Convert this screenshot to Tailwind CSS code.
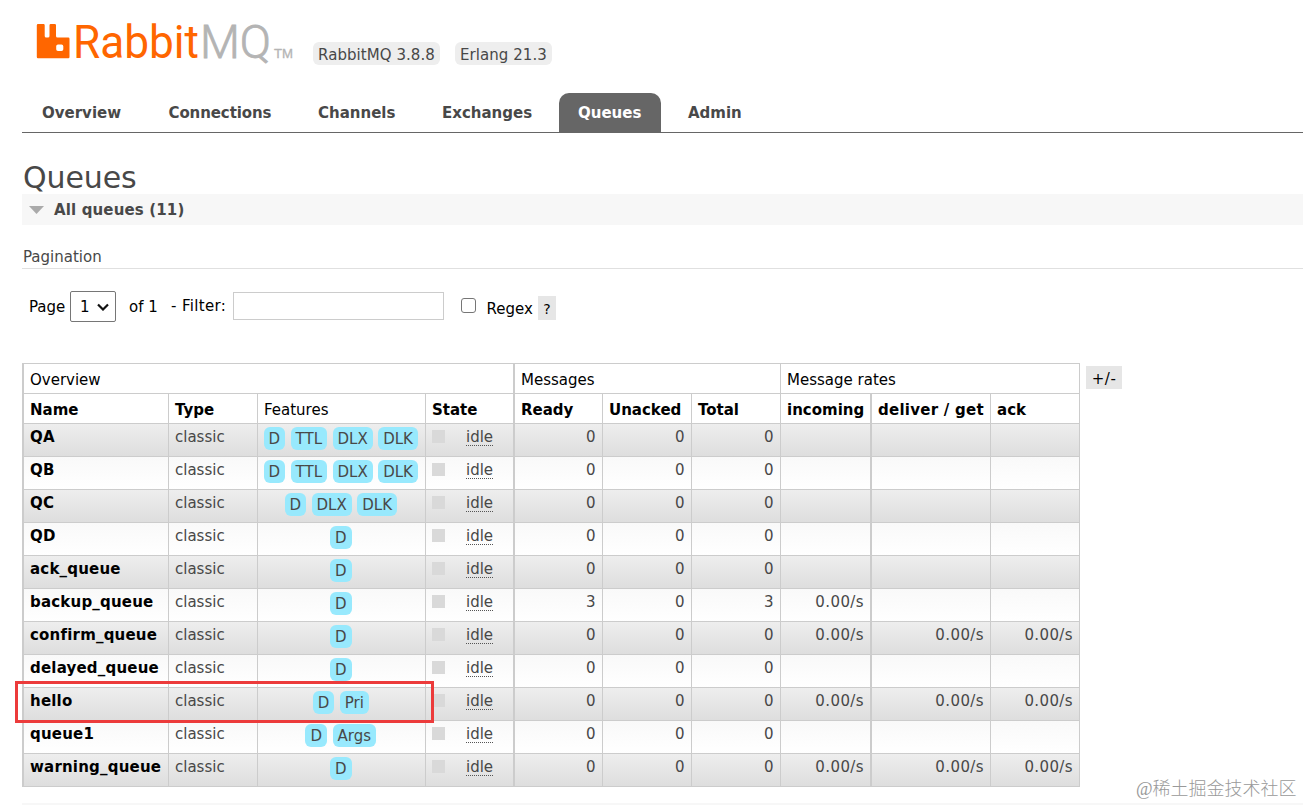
<!DOCTYPE html>
<html lang="en">
	<head>
		<title>RabbitMQ Management</title>
		<meta charset="utf-8" />
		<meta name="viewport" content="width=device-width, initial-scale=1" />
		<script src="https://cdn.jsdelivr.net/npm/@tailwindcss/browser@4"></script>
	</head>
	<body class="relative w-[1303px] h-[805px] overflow-hidden bg-white font-['DejaVu_Sans',sans-serif] text-[15px] leading-5 text-[#484848]">
		<header class="flex h-[93px] pl-[22px]">
			<svg class="w-[291px] h-[80px] shrink-0" viewBox="22 0 291 80">
				<path fill="#f60" fill-rule="evenodd" d="M38 24h5.500q1.200 0 1.200 1.200v10.800q0 1.500 1.500 1.500h1.800q1.500 0 1.500-1.500v-10.800q0-1.200 1.200-1.200h4.100q1.200 0 1.200 1.200v10.800q0 1.500 1.500 1.500h10.800q1.200 0 1.200 1.200v18.300q0 1.200-1.200 1.200h-30.300q-1.200 0-1.200-1.200v-31.800q0-1.200 1.200-1.200zM58 44.500q-1.800 0-1.800 1.800v3q0 1.800 1.800 1.800h3.500q1.800 0 1.800-1.800v-3q0-1.800-1.800-1.800z" />
				<text x="73" y="58" font-family="Roboto" font-size="47" fill="#f60" textLength="126" lengthAdjust="spacingAndGlyphs">Rabbit</text>
				<text x="200" y="58" font-family="Roboto" font-size="47" font-weight="300" fill="#b4b4b4" stroke="#b4b4b4" stroke-width=".8" textLength="71" lengthAdjust="spacingAndGlyphs">MQ</text>
				<text x="274" y="58" font-family="Liberation Sans" font-size="12.500" fill="#b4b4b4" stroke="#b4b4b4" stroke-width=".3" textLength="19" lengthAdjust="spacingAndGlyphs">TM</text>
			</svg>
			<div class="flex gap-[15px] pt-[42px] tracking-[0.06px]">
				<span class="h-[23px] w-[127px] rounded-md bg-[#eee] px-[5px] pt-[3px] whitespace-nowrap">RabbitMQ 3.8.8</span>
				<span class="h-[23px] w-[97px] rounded-md bg-[#eee] px-[5px] pt-[3px] whitespace-nowrap">Erlang 21.3</span>
			</div>
		</header>

		<nav class="ml-[22px] flex h-10 border-b border-[#666] font-bold leading-[41px] whitespace-nowrap">
			<a class="w-[127px] pl-5">Overview</a>
			<a class="w-[149px] pl-[19.5px] tracking-[-0.1px]">Connections</a>
			<a class="w-[124px] pl-5">Channels</a>
			<a class="w-[137px] pl-5">Exchanges</a>
			<a class="h-[39px] w-[102px] rounded-t-[10px] bg-[#666] pl-[19px] text-white">Queues</a>
			<a class="pl-[27px]">Admin</a>
		</nav>

		<main class="pl-[22px]">
			<h1 class="h-[61px] pl-px pt-[27px] text-[30px] leading-[36px] tracking-[-0.1px]">Queues</h1>
			<h2 class="flex h-[31px] items-center bg-[#f7f7f7] pl-[7px] font-bold tracking-[0.14px]">
				<svg class="mr-[10px] h-2 w-[15px]" viewBox="0 0 15 8"><path fill="#aaa" d="M0 0h15l-7.500 8z" /></svg>
				All queues (11)
			</h2>
			<h3 class="h-11 border-b border-[#e0e0e0] pl-px pt-[22px]">Pagination</h3>

			<!-- paging and filter controls -->
			<div class="flex h-[94px] pl-[7px] pt-[22px] text-black whitespace-nowrap">
				<span class="w-[41px] pt-[6px]">Page</span>
				<span class="flex h-[31px] w-[46px] items-center rounded-[2px] border border-[#767676] pl-[9px]">1
					<svg class="ml-[7px] h-[8px] w-[12px]" viewBox="0 0 12 8" fill="none" stroke="#111" stroke-width="2.200"><path d="M1 1.500l5 5 5-5" /></svg>
				</span>
				<span class="ml-[13px] w-[42px] pt-[6px]">of 1</span>
				<span class="w-[62px] pt-[5px] tracking-[0.35px]">- Filter:</span>
				<input class="mt-px h-7 w-[211px] border border-[#ccc]" type="text" />
				<span class="ml-[17px] mt-[7px] h-[15px] w-[15px] rounded-[3px] border border-[#767676]"></span>
				<span class="ml-[10.5px] w-[51.5px] pt-[8px]">Regex</span>
				<span class="mt-[5px] h-6 w-[18px] bg-[#e6e6e6] pt-[3px] text-center text-[14px]">?</span>
			</div>

			<div class="flex items-start">
				<table class="w-[1058px] table-fixed border-separate border-spacing-0 border-l-2 border-t border-[#ccc]">
					<colgroup>
						<col class="w-[145px]" /><col class="w-[89px]" /><col class="w-[168px]" /><col class="w-[89px]" />
						<col class="w-[88px]" /><col class="w-[89px]" /><col class="w-[89px]" />
						<col class="w-[91px]" /><col class="w-[119px]" /><col class="w-[89px]" />
					</colgroup>
					<thead class="text-left text-black whitespace-nowrap">
						<tr class="h-[30px] [&>th]:border-b [&>th]:border-r [&>th]:border-[#ccc] [&>th]:p-0 [&>th]:pl-[6px] [&>th]:pt-[3px] [&>th]:font-normal">
							<th colspan="4" class="border-r-2!">Overview</th>
							<th colspan="3">Messages</th>
							<th colspan="3">Message rates</th>
						</tr>
						<tr class="h-[30px] [&>th]:border-b [&>th]:border-r [&>th]:border-[#ccc] [&>th]:p-0 [&>th]:pl-[6px] [&>th]:pt-[3px]">
							<th>Name</th>
							<th>Type</th>
							<th class="font-normal">Features</th>
							<th class="border-r-2!">State</th>
							<th>Ready</th>
							<th>Unacked</th>
							<th>Total</th>
							<th class="border-r-2!">incoming</th>
							<th class="tracking-[0.25px]">deliver / get</th>
							<th>ack</th>
						</tr>
					</thead>
					<tbody id="queues"></tbody>
				</table>
				<span class="ml-[6px] mt-[3px] h-[23px] w-9 bg-[#e6e6e6] pt-[3px] text-center tracking-[0.5px] text-black">+/-</span>
			</div>
			<div class="mt-[16px] h-[2px] bg-[#f7f7f7]"></div>
		</main>

		<!-- highlight around the hello queue -->
		<div class="absolute left-[15px] top-[681px] h-[42px] w-[419px] border-3 border-[#ec3b3b]"></div>
		<div class="absolute left-[1136px] top-[777px] font-['Liberation_Serif','Noto_Sans_CJK_SC',sans-serif] text-[18px] font-light leading-6 text-[#999] whitespace-nowrap">@稀土掘金技术社区</div>

		<script>
			// name, features, ready, unacked, total, incoming, deliver / get, ack
			const queues = [
				['QA', 'D TTL DLX DLK', 0, 0, 0, '', '', ''],
				['QB', 'D TTL DLX DLK', 0, 0, 0, '', '', ''],
				['QC', 'D DLX DLK', 0, 0, 0, '', '', ''],
				['QD', 'D', 0, 0, 0, '', '', ''],
				['ack_queue', 'D', 0, 0, 0, '', '', ''],
				['backup_queue', 'D', 3, 0, 3, '0.00/s', '', ''],
				['confirm_queue', 'D', 0, 0, 0, '0.00/s', '0.00/s', '0.00/s'],
				['delayed_queue', 'D', 0, 0, 0, '', '', ''],
				['hello', 'D Pri', 0, 0, 0, '0.00/s', '0.00/s', '0.00/s'],
				['queue1', 'D Args', 0, 0, 0, '', '', ''],
				['warning_queue', 'D', 0, 0, 0, '0.00/s', '0.00/s', '0.00/s'],
			];

			document.querySelector('#queues').innerHTML = queues.map(([name, features, ...stats]) => {
				const tags = features.split(' ').map(f => `<span class="h-[23px] rounded-md bg-[#98e9fd] px-[5px] pt-[2px]">${f}</span>`).join('');
				const cells = stats.map((s, i) => `<td class="text-right ${i === 3 ? 'border-r-2!' : ''} ${i > 2 ? 'pr-[6px] tracking-[0.4px]' : 'pr-[6.5px]'}">${s}</td>`).join('');
				return `<tr class="h-[33px] odd:bg-linear-to-b odd:from-[#eee] odd:to-[#ddd] even:bg-linear-to-b even:from-[#f9f9f9] even:to-white [&>td]:h-[33px] [&>td]:border-b [&>td]:border-r [&>td]:border-[#ccc] [&>td]:pt-[3px] [&>td]:align-top whitespace-nowrap">
					<td class="pl-[6px] font-bold tracking-[0.2px] text-black">${name}</td>
					<td class="pl-[6px]">classic</td>
					<td><div class="flex justify-center gap-[5.5px] pr-[1.5px]">${tags}</div></td>
					<td class="border-r-2!"><div class="flex pl-[6px]"><span class="mt-[3px] mr-[21px] h-[13px] w-[13px] bg-[#d9d9d9]"></span><span class="h-[19px] border-b border-dotted border-[#555]">idle</span></div></td>
					${cells}
				</tr>`;
			}).join('');
		</script>
	</body>
</html>
